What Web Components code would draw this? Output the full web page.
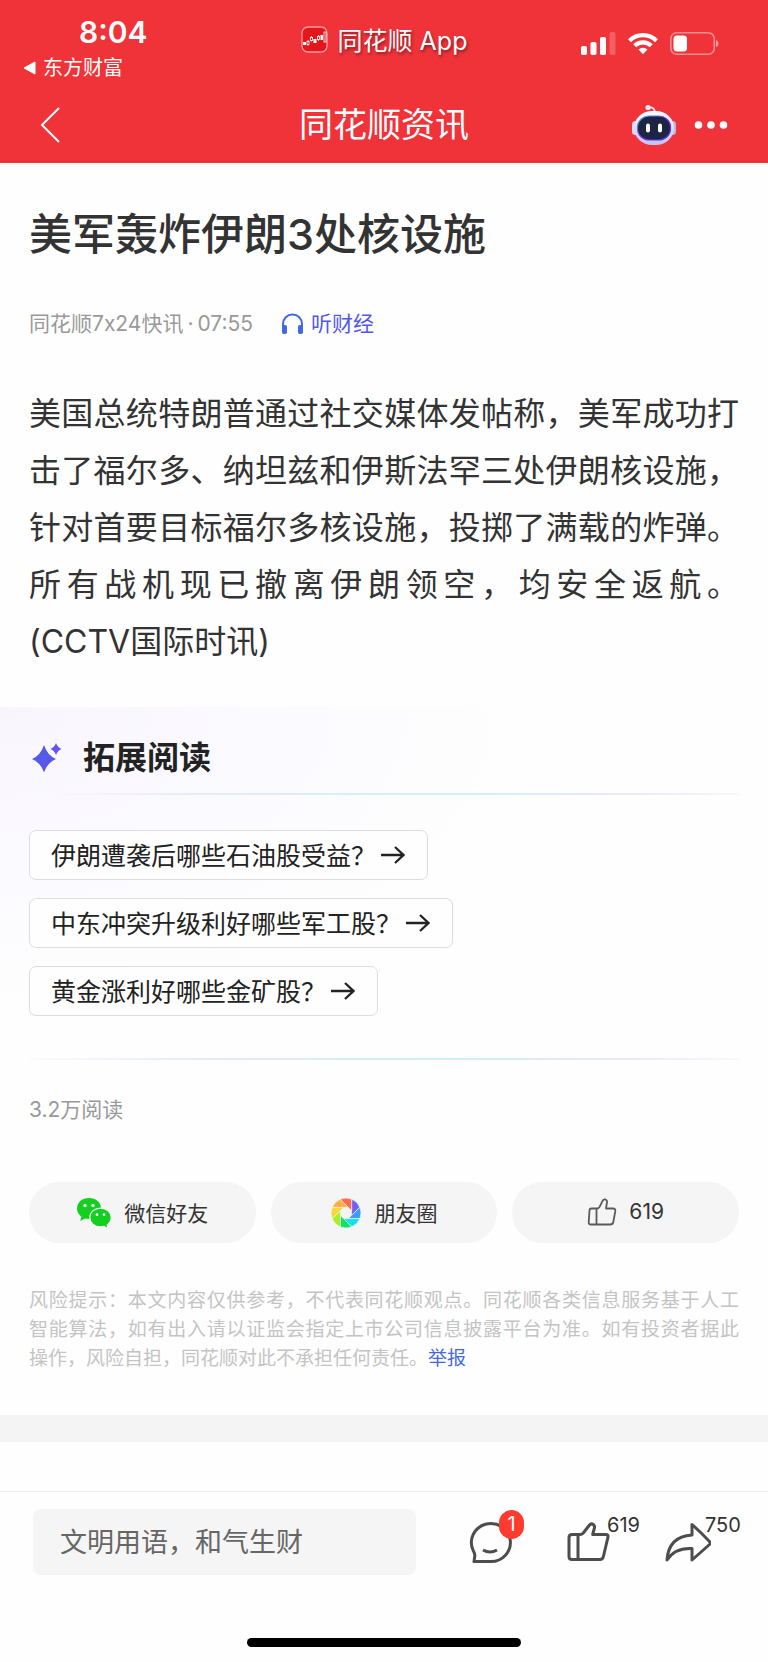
<!DOCTYPE html>
<html lang="zh-CN">
<head>
<meta charset="utf-8">
<meta name="viewport" content="width=device-width, initial-scale=1">
<title>同花顺资讯</title>
<style>
  html { background: #fefefe; }
  body {
    margin: 0;
    min-height: 100vh;
    display: flex;
    flex-direction: column;
    font-family: Inter, "Noto Sans CJK SC", sans-serif;
    color: #333;
  }
  main { flex: 1; }
</style>
</head>
<body>
<page-header>
  <status-bar time="8:04" back="东方财富">同花顺 App</status-bar>
  <nav-bar>同花顺资讯</nav-bar>
</page-header>
<main>
  <news-article source="同花顺7x24快讯" time="07:55">
    <span slot="title">美军轰炸伊朗3处核设施</span>
    美国总统特朗普通过社交媒体发帖称，美军成功打击了福尔多、纳坦兹和伊斯法罕三处伊朗核设施，针对首要目标福尔多核设施，投掷了满载的炸弹。所有战机现已撤离伊朗领空，均安全返航。<wbr><span style="white-space:nowrap">(CCTV国际时讯)</span>
  </news-article>
  <further-reading heading="拓展阅读">
    <question-chip>伊朗遭袭后哪些石油股受益？</question-chip>
    <question-chip>中东冲突升级利好哪些军工股？</question-chip>
    <question-chip>黄金涨利好哪些金矿股？</question-chip>
  </further-reading>
  <share-panel reads="3.2万阅读">
    <share-pill icon="wechat">微信好友</share-pill>
    <share-pill icon="moments">朋友圈</share-pill>
    <share-pill icon="thumb">619</share-pill>
  </share-panel>
  <risk-note></risk-note>
</main>
<action-bar>
  <action-button icon="chat" label="评论"><count-badge slot="count">1</count-badge></action-button>
  <action-button icon="thumb" label="点赞"><span slot="count">619</span></action-button>
  <action-button icon="share" label="分享"><span slot="count">750</span></action-button>
</action-bar>

<script>
const define = (name, render) => customElements.define(name, class extends HTMLElement {
  connectedCallback() {
    if (this.shadowRoot) return;
    const t = document.createElement('template');
    t.innerHTML = render(this);
    this.attachShadow({ mode: 'open' }).append(t.content.cloneNode(true));
  }
});

/* Camera-shutter mark: eight blades around an octagonal hole. */
const shutter = () => {
  const colors = ['#7061f5', '#3f9bfb', '#14dff5', '#10e562', '#a8ee2c', '#f3d93a', '#ffae42', '#ff6b4c'];
  const at = (r, deg) => {
    const a = (deg - 90) * Math.PI / 180;
    return (16 + r * Math.cos(a)).toFixed(2) + ' ' + (16 + r * Math.sin(a)).toFixed(2);
  };
  return colors.map((c, i) => {
    const a = 22 + i * 45;
    return `<path fill="${c}" stroke="#f5f5f5" stroke-width="0.7" d="M${at(15, a)}A15 15 0 0 1 ${at(15, a + 45)}L${at(6, a + 92)}L${at(6, a + 47)}Z"/>`;
  }).join('');
};

const icons = {
  wechat: `<svg width="36" height="32" viewBox="0 0 36 32" aria-hidden="true">
    <path fill="#12cf20" d="M13 1C5.800 1 1 5.700 1 11.500c0 3.400 1.700 6.200 4.500 8.200L4.200 24l5-2.500c1.200.3 2.500.5 3.800.5 7.200 0 12-4.600 12-10.500S20.200 1 13 1z"/>
    <path fill="#12cf20" stroke="#f5f5f5" stroke-width="1.200" d="M24.500 11.200c-6.200 0-10.700 4-10.700 9.300s4.500 9.400 10.700 9.400c1.200 0 2.300-.2 3.400-.5l4.300 2.300-1.100-3.800c2.500-1.700 4.100-4.300 4.100-7.400 0-5.300-4.500-9.300-10.700-9.300z"/>
    <g fill="#f5f5f5"><circle cx="9" cy="8.500" r="1.700"/><circle cx="17" cy="8.500" r="1.700"/><circle cx="21" cy="17.700" r="1.400"/><circle cx="28" cy="17.700" r="1.400"/></g></svg>`,
  moments: `<svg width="32" height="32" viewBox="0 0 32 32" aria-hidden="true">${shutter()}</svg>`,
  thumb: `<svg width="30" height="30" viewBox="0 0 30 30" aria-hidden="true"><path fill="none" stroke="#5a5a5a" stroke-width="1.800" stroke-linejoin="round" d="M2.500 12.500q0-2 2-2h6q1.500-.2 2.200-1.800l3-6q.9-1.600 2.600-1.200 2 .6 1.700 2.700l-1 6.300h7q2.700 0 2.300 2.700l-2 10.800q-.5 2.500-3 2.500H3.700q-2.200 0-2-2.200zM9.500 10.500v16"/></svg>`
};

define('page-header', () => `
  <style>:host{display:block;background:#f03239;color:#fff}</style>
  <slot></slot>`);

define('status-bar', el => `
  <style>
    :host{display:grid;grid-template-columns:1fr auto 1fr;height:86px;padding:0 23px;box-sizing:border-box}
    .left{padding-top:14px}
    time{display:block;font:600 30px/36px Inter,sans-serif;padding-left:56px}
    a{display:flex;align-items:center;gap:7px;margin-top:4px;color:#fff;text-decoration:none;font-size:20px;line-height:28px}
    .app{display:flex;align-items:center;align-self:start;gap:10px;height:52px;margin-top:13px;font-size:25px;text-shadow:1px 2px 3px rgba(0,0,0,.45);white-space:nowrap}
    .right{display:flex;justify-content:flex-end;gap:12px;padding:32px 26px 0 0}
    svg{display:block}
  </style>
  <div class="left"><time>${el.getAttribute('time')}</time>
    <a href="#"><svg width="13" height="14" viewBox="0 0 13 14" aria-hidden="true"><path fill="#fff" stroke="#fff" stroke-width="1" stroke-linejoin="round" d="M1 7L12 1v12z"/></svg>${el.getAttribute('back')}</a></div>
  <div class="app">
    <svg width="27" height="27" viewBox="0 0 27 27" aria-hidden="true">
      <rect x="1" y="1" width="25" height="25" rx="6" fill="#e3161c" stroke="#f79a9d" stroke-width="1.300"/>
      <g fill="#fff"><rect x="2" y="16" width="3" height="3"/><rect x="12.500" y="13" width="3" height="4"/><rect x="19.500" y="9" width="2.500" height="5"/></g>
      <g fill="none" stroke="#fff" stroke-width=".8"><path d="M7 14v1.500M7 18.500V20M10.500 10v1.500M10.500 14v1.500M17.500 9v1.500M17.500 13.500V15"/><rect x="6" y="15.500" width="2" height="3"/><rect x="9.300" y="11.500" width="2.300" height="3"/><rect x="16.500" y="10.500" width="2" height="3"/><rect x="23" y="6" width="2" height="10"/></g>
    </svg><span><slot></slot></span></div>
  <div class="right">
    <svg width="35" height="23" viewBox="0 0 35 23" aria-hidden="true"><g fill="#fff"><rect y="14" width="6" height="9" rx="1.800"/><rect x="9.500" y="10" width="6" height="13" rx="1.800"/><rect x="19" y="5" width="6" height="18" rx="1.800"/><rect x="28.500" width="6" height="23" rx="1.800" opacity=".22"/></g></svg>
    <svg width="30" height="23" viewBox="0 0 30 23" aria-hidden="true"><g fill="none" stroke="#fff" stroke-width="4.200"><path d="M1.500 8.800a19 19 0 0 1 27 0"/><path d="M6.700 13.800a12 12 0 0 1 16.600 0"/></g><path fill="#fff" d="M10.500 17.500a6.600 6.600 0 0 1 9 0L15 22.300z"/></svg>
    <svg width="49" height="23" viewBox="0 0 49 23" aria-hidden="true"><rect x=".8" y=".8" width="43.500" height="21.400" rx="6" fill="none" stroke="#fff" stroke-opacity=".45" stroke-width="1.600"/><rect x="3.500" y="3.500" width="13.500" height="16" rx="3.500" fill="#fff"/><path fill="#fff" opacity=".5" d="M46 8c3.300 1 3.300 6 0 7z"/></svg>
  </div>`);

define('nav-bar', () => `
  <style>
    :host{display:grid;grid-template-columns:1fr auto 1fr;align-items:center;height:77px;padding:0 40px;box-sizing:border-box}
    h1{margin:0;font-size:34px;line-height:44px;font-weight:400}
    button{display:block;border:0;padding:0;background:none}
    .tools{display:flex;justify-content:flex-end;align-items:center;gap:18px}
    svg{display:block}
  </style>
  <button aria-label="返回"><svg width="20" height="36" viewBox="0 0 20 36" aria-hidden="true"><path fill="none" stroke="#fff" stroke-width="2" d="M19 1L2 18l17 17"/></svg></button>
  <h1><slot></slot></h1>
  <div class="tools">
    <button aria-label="智能助手"><svg width="44" height="42" viewBox="0 0 44 42" aria-hidden="true">
      <defs><linearGradient id="s" x1="0" y1="0" x2="0" y2="1"><stop offset="0" stop-color="#fff"/><stop offset="1" stop-color="#c4c1f2"/></linearGradient>
      <linearGradient id="r" x1="0" y1="0" x2="1" y2="1"><stop offset="0" stop-color="#4fc0e8"/><stop offset=".5" stop-color="#8a2be2"/><stop offset="1" stop-color="#4838e8"/></linearGradient></defs>
      <path d="M16 3.500q7-1 6.500 5" fill="none" stroke="#e8e0f4" stroke-width="1.800"/><circle cx="16" cy="3.500" r="2.600" fill="#eee8fa"/>
      <rect y="17" width="7" height="14" rx="3.500" fill="#dcdaf6"/><rect x="37" y="17" width="7" height="14" rx="3.500" fill="#b9b8ec"/>
      <rect x="2" y="7" width="40" height="34" rx="18" ry="17" fill="url(#s)"/>
      <rect x="5.500" y="12" width="33" height="24" rx="12" ry="11" fill="#1d2545" stroke="url(#r)" stroke-width="1.200"/>
      <rect x="14" y="19.500" width="4" height="9" rx="2" fill="#fff"/><rect x="26" y="19.500" width="4" height="9" rx="2" fill="#fff"/></svg></button>
    <button aria-label="更多"><svg width="34" height="10" viewBox="0 0 34 10" aria-hidden="true"><g fill="#fff"><circle cx="4.500" cy="5" r="3.800"/><circle cx="17" cy="5" r="3.800"/><circle cx="29.500" cy="5" r="3.800"/></g></svg></button>
  </div>`);

define('news-article', el => `
  <style>
    :host{display:block;padding:41px 29px 37px}
    h2{margin:0;font-size:43px;line-height:60px;font-weight:500;color:#333}
    .meta{display:flex;align-items:center;gap:28px;margin-top:45px;font-size:21px;line-height:30px;color:#999}
    .meta i{font-style:normal;margin:0 4px}
    .meta a{display:flex;align-items:center;gap:7px;color:#5257ee;text-decoration:none}
    p{margin:46px 0 0;font-size:32px;line-height:57px;text-align:justify}
  </style>
  <article>
    <h2><slot name="title"></slot></h2>
    <div class="meta"><span>${el.getAttribute('source')}<i>·</i>${el.getAttribute('time')}</span>
      <a href="#"><svg width="23" height="22" viewBox="0 0 23 22" aria-hidden="true"><path fill="none" stroke="#4468e0" stroke-width="2" d="M2 16v-5a9.500 9.500 0 0 1 19 0v5"/><rect x="1" y="12" width="5" height="9" rx="1.800" fill="#4468e0"/><rect x="17" y="12" width="5" height="9" rx="1.800" fill="#4468e0"/></svg>听财经</a></div>
    <p><slot></slot></p>
  </article>`);

define('further-reading', el => `
  <style>
    :host{display:block;padding:0 29px;background:radial-gradient(ellipse 520px 300px at 0 0,#f9f5fe 0%,#fbfaff 50%,rgba(254,254,254,0) 100%)}
    h2{display:flex;align-items:center;gap:21px;margin:0;padding:26px 0 10px 3px;font-size:32px;line-height:50px;font-weight:600;color:#222}
    hr{height:2px;margin:0;border:0;background:linear-gradient(90deg,#fbfaff,#e4ebfd 25%,#cfeffb 60%,#ebe8fc 85%,#f9f7ff)}
    .list{display:flex;flex-direction:column;align-items:flex-start;gap:18px;padding:35px 0 42px}
  </style>
  <section>
    <h2><svg width="30" height="30" viewBox="0 0 30 30" aria-hidden="true"><defs><linearGradient id="g" x1="0" y1="0" x2="1" y2="1"><stop offset="0" stop-color="#4066e4"/><stop offset="1" stop-color="#6a4cf0"/></linearGradient></defs>
      <path fill="url(#g)" d="M12 2q3.500 10.500 12 14-8.500 3.500-12 13.500Q8.500 19.500 0 16 8.500 12.500 12 2z"/><path fill="#6355ee" d="M24 0q1.700 4.500 5.500 6-3.800 1.500-5.500 6-1.700-4.500-5.500-6 3.800-1.500 5.500-6z"/></svg>${el.getAttribute('heading')}</h2>
    <hr>
    <div class="list"><slot></slot></div>
    <hr>
  </section>`);

define('question-chip', () => `
  <style>
    :host{display:block}
    button{display:flex;align-items:center;gap:5px;height:50px;padding:0 22px 0 21px;border:1px solid #ddd;border-radius:7px;background:#fefefe;font:inherit;font-size:25px;color:#222;white-space:nowrap}
    span{padding-bottom:2px}
  </style>
  <button><span><slot></slot></span><svg width="24" height="20" viewBox="0 0 24 20" aria-hidden="true"><path fill="none" stroke="#222" stroke-width="2.300" d="M0 10h22.500M14 2l8.500 8-8.500 8"/></svg></button>`);

define('share-panel', el => `
  <style>
    :host{display:block;padding:34px 29px 0}
    p{margin:0;font-size:21px;line-height:32px;color:#999}
    .row{display:grid;grid-template-columns:repeat(3,1fr);gap:15px;margin-top:56px}
  </style>
  <p>${el.getAttribute('reads')}</p>
  <div class="row"><slot></slot></div>`);

define('share-pill', el => `
  <style>
    :host{display:block}
    button{display:flex;align-items:center;justify-content:center;gap:12px;width:100%;height:61px;padding:0;border:0;border-radius:31px;background:#f5f5f5;font:inherit;font-size:21px;color:#333}
    svg{display:block}
    span{padding-bottom:2px}
  </style>
  <button>${icons[el.getAttribute('icon')]}<span><slot></slot></span></button>`);

define('risk-note', () => `
  <style>
    :host{display:block;padding:43px 29px 42px;border-bottom:27px solid #f4f4f4;font-size:19px;line-height:29px;color:#c4c4c4}
    p{margin:0}
    .full{display:block;text-align:justify;text-align-last:justify}
    a{color:#4468e0;text-decoration:none}
  </style>
  <p><span class="full">风险提示：本文内容仅供参考，不代表同花顺观点。同花顺各类信息服务基于人工</span><span class="full">智能算法，如有出入请以证监会指定上市公司信息披露平台为准。如有投资者据此</span>操作，风险自担，同花顺对此不承担任何责任。<a href="#">举报</a></p>`);

define('action-bar', () => `
  <style>
    :host{display:block;border-top:1px solid #f0f0f0;background:#fefefe}
    .bar{display:flex;align-items:center;padding:17px 30px 0 33px}
    input{flex:1;min-width:0;height:66px;box-sizing:border-box;margin:0 53px 0 0;padding:0 27px;border:0;border-radius:8px;background:#f5f5f5;font:inherit;font-size:27px;color:#333}
    input::placeholder{color:#666;opacity:1}
    .acts{display:flex;gap:25px}
    .home{width:36%;max-width:274px;height:9px;margin:63px auto 15px;border-radius:5px;background:#000}
  </style>
  <div class="bar"><input type="text" aria-label="评论" placeholder="文明用语，和气生财"><div class="acts"><slot></slot></div></div>
  <div class="home"></div>`);

const actionIcons = {
  chat: '<path d="M5 42.500h16.500a19.500 19 0 1 0-17.300-11q1.800 3 1.600 5.500z"/><path d="M14 31q7 4 14 0"/>',
  thumb: '<path d="M2 18.500q0-3 3-3h8q2 0 3.300-1.500l6.200-8q1.700-2 3.700-.5 1.800 1.400 1.200 3.500l-1.700 6.500h13q3 0 2.200 3l-4.500 19q-.6 3-3.500 3H5q-3 0-3-3zM11 15.500v25"/>',
  share: '<path d="M27 5.500v10.500C11 17 3 26 2 41q8-12.500 25-11.500v11.500q9-8 17.500-15.500q1.500-1.500 0-3q-8-8.500-17.500-17z"/>'
};

define('action-button', el => `
  <style>
    :host{display:block;position:relative;width:73px;height:66px}
    button{display:flex;align-items:center;width:100%;height:100%;padding:0;border:0;background:none;font:inherit;font-size:20px;line-height:24px;color:#333}
    svg{display:block}
    .count{position:absolute;left:40px;top:4px;display:block}
  </style>
  <button aria-label="${el.getAttribute('label')}"><svg width="46" height="46" viewBox="0 0 46 46" fill="none" stroke="#4d4d4d" stroke-width="3" stroke-linejoin="round" aria-hidden="true">${actionIcons[el.getAttribute('icon')]}</svg><span class="count"><slot name="count"></slot></span></button>`);

define('count-badge', () => `
  <style>:host{display:block;width:25px;height:29px;margin:-3px 0 0 -10px;border-radius:13px;background:#ff3b30;color:#fff;font-size:20px;line-height:29px;text-align:center}</style>
  <slot></slot>`);
</script>
</body>
</html>
